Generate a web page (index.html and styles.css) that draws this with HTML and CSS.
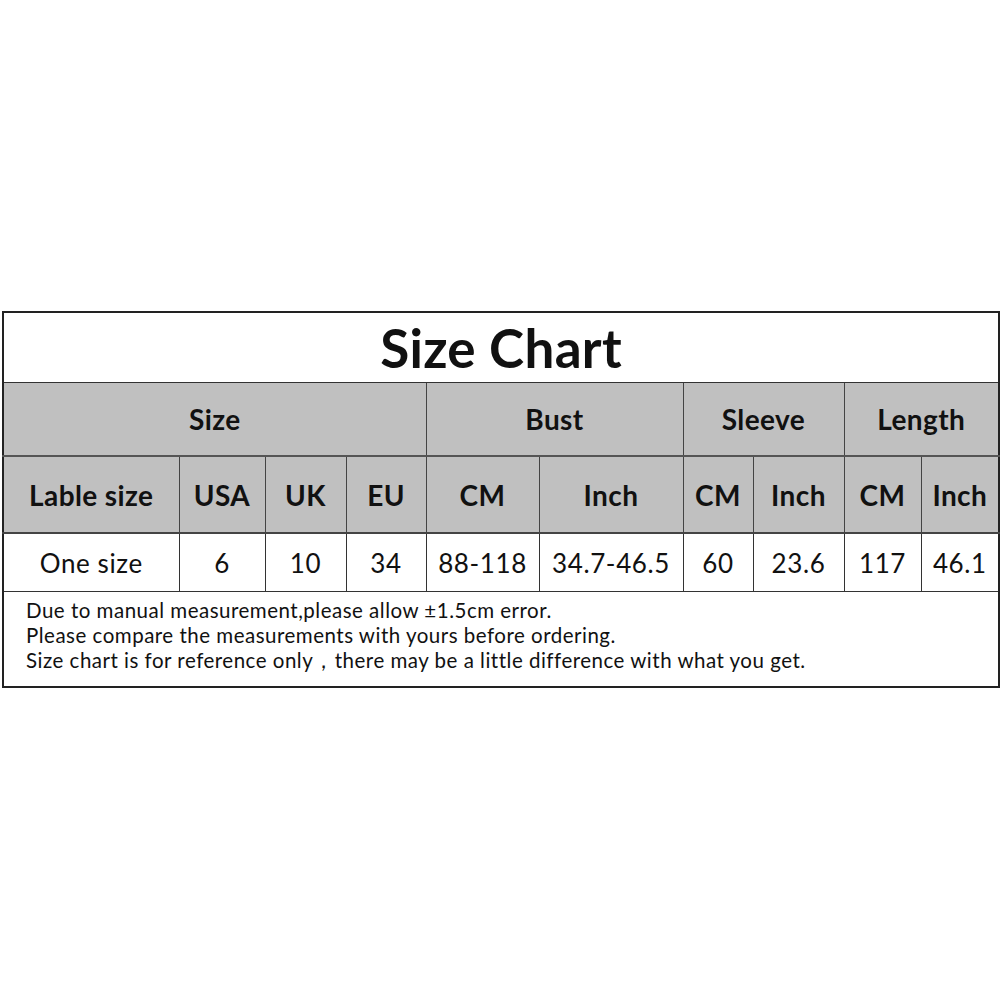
FILE: index.html
```html
<!DOCTYPE html>
<html>
<head>
<meta charset="utf-8">
<link rel="stylesheet" href="styles.css">
</head>
<body>
<div class="page">
<table class="chart">
<colgroup>
<col class="c1"><col class="c2"><col class="c3"><col class="c4"><col class="c5"><col class="c6"><col class="c7"><col class="c8"><col class="c9"><col class="c10">
</colgroup>
<tr class="title-row"><td colspan="10" class="title">Size Chart</td></tr>
<tr class="head1"><th colspan="4">Size</th><th colspan="2">Bust</th><th colspan="2">Sleeve</th><th colspan="2">Length</th></tr>
<tr class="head2"><th>Lable size</th><th>USA</th><th>UK</th><th>EU</th><th>CM</th><th>Inch</th><th>CM</th><th>Inch</th><th>CM</th><th>Inch</th></tr>
<tr class="data"><td>One size</td><td>6</td><td>10</td><td>34</td><td>88-118</td><td>34.7-46.5</td><td>60</td><td>23.6</td><td>117</td><td>46.1</td></tr>
<tr class="notes-row"><td colspan="10" class="notes">
<div>Due to manual measurement,please allow ±1.5cm error.</div>
<div>Please compare the measurements with yours before ordering.</div>
<div>Size chart is for reference only，there may be a little difference with what you get.</div>
</td></tr>
</table>
</div>
</body>
</html>
```
FILE: styles.css
```css
html, body { margin: 0; padding: 0; background: #fff; }
.page { padding: 311px 0 0 2px; font-family: Lato, "Open Sans", sans-serif; color: #111; }
.chart { border-collapse: collapse; table-layout: fixed; width: 997px; border: 2px solid #222; }
.c1 { width: 176px; } .c2 { width: 86px; } .c3 { width: 81px; } .c4 { width: 80px; }
.c5 { width: 113px; } .c6 { width: 144px; } .c7 { width: 70px; } .c8 { width: 91px; }
.c9 { width: 77px; } .c10 { width: 78px; }
.chart td, .chart th { border: 1px solid #333; padding: 0; text-align: center; }
.title-row { height: 70px; }
.title { font-weight: 700; font-size: 53px; letter-spacing: 0.3px; padding-top: 4px; }
.head1 { height: 74px; }
.head2 { height: 77px; }
.head1 th, .head2 th { background: #c0c0c0; font-weight: 700; font-size: 28px; letter-spacing: 0.4px; border-color: #444; }
.head2 th { border-top: 2px solid #555; border-bottom: 2px solid #444; }
.data { height: 58px; }
.data td { font-size: 26px; letter-spacing: 0.6px; padding-top: 2px; }
.notes-row { height: 96px; }
.notes { text-align: left !important; font-size: 20.5px; letter-spacing: 0.5px; line-height: 25px; padding: 0 0 6px 22px !important; vertical-align: middle; }
```
